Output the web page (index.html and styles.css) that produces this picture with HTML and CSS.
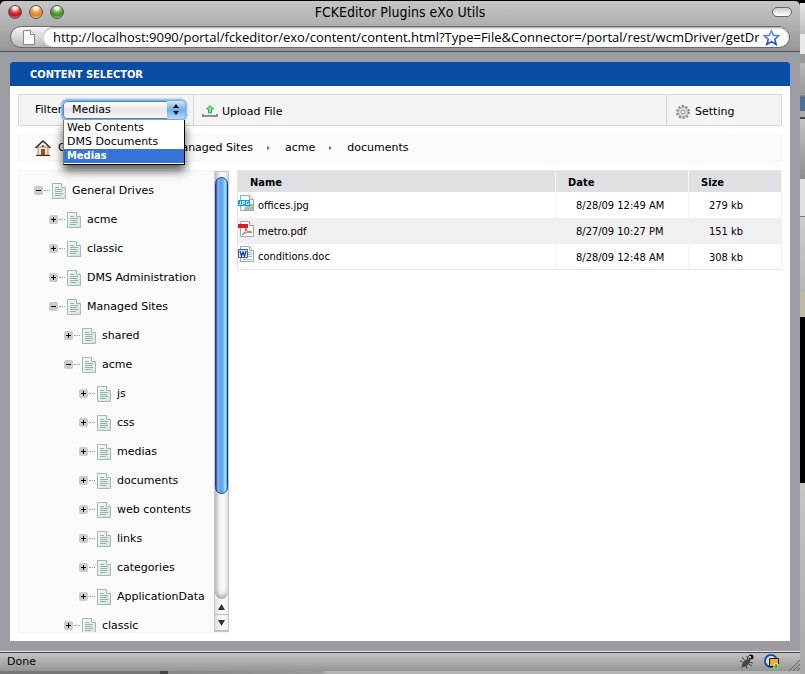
FILE: index.html
```html
<!DOCTYPE html>
<html lang="en">
<head>
<meta charset="utf-8">
<title>FCKEditor Plugins eXo Utils</title>
<link rel="stylesheet" href="styles.css">
</head>
<body>
<svg class="defs" aria-hidden="true">
  <defs>
    <linearGradient id="page-fill" x1="0" y1="0" x2="1" y2="1"><stop offset="0" stop-color="#f4faf9"/><stop offset="1" stop-color="#d5e3e1"/></linearGradient>
    <linearGradient id="star-fill" x1="0" y1="0" x2="0" y2="1"><stop offset="0" stop-color="#6fa5e6"/><stop offset="1" stop-color="#1443cc"/></linearGradient>
    <symbol id="doc" viewBox="0 0 14 16">
      <path d="M.5.5h9l4 4v11H.5z" fill="url(#page-fill)" stroke="#a3b9b7"/>
      <path d="M9.500.5v4h4" fill="#fff" stroke="#a3b9b7"/>
      <path d="M3 4.500h4M3 6.500h8M3 8.500h7M3 10.500h8M3 12.500h6" stroke="#9cb0ae"/>
    </symbol>
    <symbol id="file" viewBox="0 0 16 16">
      <path d="M2.500.5h9l4 4v11h-13z" fill="#fff" stroke="#a5a5a5"/>
      <path d="M11.500.5v4h4" fill="#eee" stroke="#a5a5a5"/>
    </symbol>
  </defs>
</svg>
<div class="window">
  <header class="chrome">
    <div class="titlebar">
      <div class="lights">
        <button class="light red" aria-label="Close"></button>
        <button class="light amber" aria-label="Minimize"></button>
        <button class="light green" aria-label="Zoom"></button>
      </div>
      <h1>FCKEditor Plugins eXo Utils</h1>
      <button class="pill" aria-label="Toggle toolbar"></button>
    </div>
    <div class="location">
      <svg class="page-icon" width="12" height="15" viewBox="0 0 12 15"><path d="M.5.5h7l4 4v10H.5z" fill="#fff" stroke="#888"/><path d="M7.500.5v4h4" fill="#eee" stroke="#888"/></svg>
      <div class="address">
        <input type="text" aria-label="Address" value="http://localhost:9090/portal/fckeditor/exo/content/content.html?Type=File&amp;Connector=/portal/rest/wcmDriver/getDrivers">
        <svg width="17" height="17" viewBox="0 0 17 17"><path d="M8.500 1.500l2.100 4.800 5.200.4-4 3.500 1.300 5.200-4.600-2.800-4.600 2.800 1.300-5.200-4-3.500 5.200-.4z" fill="#f5faff" stroke="url(#star-fill)" stroke-width="1.600"/></svg>
      </div>
    </div>
  </header>

  <main class="page">
    <section class="dialog">
      <h2>Content Selector</h2>
      <div class="body">
        <div class="toolbar">
          <div class="filter">
            <label for="filter">Filter</label>
            <div class="combo">
              <select id="filter"><option>Web Contents</option><option>DMS Documents</option><option selected>Medias</option></select>
              <svg width="18" height="18" viewBox="0 0 18 18"><path d="M9 3l3 4H6zM9 14l3-4H6z" fill="#111"/></svg>
              <ul class="menu">
                <li>Web Contents</li>
                <li>DMS Documents</li>
                <li class="active">Medias</li>
              </ul>
            </div>
          </div>
          <button class="tool upload">
            <svg width="16" height="16" viewBox="0 0 16 16"><path d="M1 10v2h14v-2" fill="none" stroke="#8b8b8b" stroke-width="2"/><path d="M8 1.500l3.500 3.500H9.500v4h-3V5h-2z" fill="#8ce58c" stroke="#2fa84a"/></svg>
            Upload File
          </button>
          <button class="tool setting">
            <svg width="16" height="16" viewBox="0 0 16 16"><circle cx="8" cy="8" r="6" fill="#d9d9d9" stroke="#8e8e8e" stroke-width="2" stroke-dasharray="2.200 1.570"/><circle cx="8" cy="8" r="4.500" fill="#e6e6e6" stroke="#aaa"/><circle cx="8" cy="8" r="2" fill="#fff" stroke="#888"/></svg>
            Setting
          </button>
        </div>

        <nav class="crumbs" aria-label="Breadcrumb">
          <svg width="18" height="18" viewBox="0 0 18 18"><path d="M4 8h10v8H4z" fill="#f3e6d8" stroke="#9b7d68"/><path d="M1.500 9L9 2l7.500 7" fill="none" stroke="#3c2018" stroke-width="1.500"/><path d="M7 10h4v6H7z" fill="#a64e26"/><path d="M8 6h2v2H8z" fill="#865238"/><path d="M2 16.500h14" stroke="#5c1f14"/></svg>
          <a href="#">General Drives</a><i></i>
          <a href="#">Managed Sites</a><i></i>
          <a href="#">acme</a><i></i>
          <a href="#">documents</a>
        </nav>

        <div class="panes">
          <div class="tree-pane">
            <ul class="tree">
              <li class="l0 open"><button aria-label="Collapse"></button><svg><use href="#doc"/></svg><a href="#">General Drives</a></li>
              <li class="l1"><button aria-label="Expand"></button><svg><use href="#doc"/></svg><a href="#">acme</a></li>
              <li class="l1"><button aria-label="Expand"></button><svg><use href="#doc"/></svg><a href="#">classic</a></li>
              <li class="l1"><button aria-label="Expand"></button><svg><use href="#doc"/></svg><a href="#">DMS Administration</a></li>
              <li class="l1 open"><button aria-label="Collapse"></button><svg><use href="#doc"/></svg><a href="#">Managed Sites</a></li>
              <li class="l2"><button aria-label="Expand"></button><svg><use href="#doc"/></svg><a href="#">shared</a></li>
              <li class="l2 open"><button aria-label="Collapse"></button><svg><use href="#doc"/></svg><a href="#">acme</a></li>
              <li class="l3"><button aria-label="Expand"></button><svg><use href="#doc"/></svg><a href="#">js</a></li>
              <li class="l3"><button aria-label="Expand"></button><svg><use href="#doc"/></svg><a href="#">css</a></li>
              <li class="l3"><button aria-label="Expand"></button><svg><use href="#doc"/></svg><a href="#">medias</a></li>
              <li class="l3"><button aria-label="Expand"></button><svg><use href="#doc"/></svg><a href="#">documents</a></li>
              <li class="l3"><button aria-label="Expand"></button><svg><use href="#doc"/></svg><a href="#">web contents</a></li>
              <li class="l3"><button aria-label="Expand"></button><svg><use href="#doc"/></svg><a href="#">links</a></li>
              <li class="l3"><button aria-label="Expand"></button><svg><use href="#doc"/></svg><a href="#">categories</a></li>
              <li class="l3"><button aria-label="Expand"></button><svg><use href="#doc"/></svg><a href="#">ApplicationData</a></li>
              <li class="l2"><button aria-label="Expand"></button><svg><use href="#doc"/></svg><a href="#">classic</a></li>
            </ul>
            <div class="scrollbar">
              <div class="track"><div class="thumb"></div></div>
              <button aria-label="Scroll up"><svg width="7" height="6" viewBox="0 0 7 6"><path d="M3.500 0L7 6H0z" fill="#333"/></svg></button>
              <button aria-label="Scroll down"><svg width="7" height="6" viewBox="0 0 7 6"><path d="M3.500 6L7 0H0z" fill="#333"/></svg></button>
            </div>
          </div>

          <table class="files">
            <thead><tr><th>Name</th><th class="date">Date</th><th class="size">Size</th></tr></thead>
            <tbody>
              <tr><td><span class="name"><svg><use href="#file"/><path d="M6 14c2-5 5-6 9-5v6H6z" fill="#9fc4a8"/><path d="M0 5h12v6H0z" fill="#119bea"/><path d="M2.500 6v3.500H1M4.500 10V6.500h2v2h-2M10.500 6.500h-2v3h2V8" fill="none" stroke="#fff" stroke-width=".9"/></svg><a href="#">offices.jpg</a></span></td><td>8/28/09 12:49 AM</td><td>279 kb</td></tr>
              <tr><td><span class="name"><svg><use href="#file"/><path d="M0 3h10v4H0z" fill="#dc1a21"/><path d="M4 14c3-2 4-5 4-7 0 3 3 5 6 4-4-.5-7 .5-10 3z" fill="none" stroke="#d9484b"/></svg><a href="#">metro.pdf</a></span></td><td>8/27/09 10:27 PM</td><td>151 kb</td></tr>
              <tr><td><span class="name"><svg><use href="#file"/><path d="M10 6.500h4M10 8.500h4M10 10.500h4M5 13.500h9" stroke="#aab4c8"/><path d="M.5 3.500h9v8h-9z" fill="#dce8fa" stroke="#2c5fb4"/><path d="M2 5l1.500 5L5 6l1.500 4L8 5" fill="none" stroke="#173f94" stroke-width="1.300"/></svg><a href="#">conditions.doc</a></span></td><td>8/28/09 12:48 AM</td><td>308 kb</td></tr>
            </tbody>
          </table>
        </div>
      </div>
    </section>
  </main>

  <footer class="status">
    <span>Done</span>
    <svg width="18" height="16" viewBox="0 0 18 16"><path d="M3 14L13 4M2 7l5 2M4 3l4 5M9 15l-1-5M14 12l-5-3M9 2l1 5M15 9l-5-1" stroke="#444" fill="none"/><ellipse cx="8" cy="9" rx="5" ry="2.500" transform="rotate(-45 8 9)" fill="#444"/><circle cx="13" cy="3" r="2.500" fill="#111"/><circle cx="12" cy="3" r="1" fill="#fff"/></svg>
    <svg width="16" height="16" viewBox="0 0 16 16"><circle cx="7" cy="7" r="6" fill="#cfe6ff" stroke="#1d4f9e" stroke-width="2"/><path d="M5.500 4.500h9v8h-9z" fill="#ffa51e" stroke="#1a1a1a"/><path d="M6 5h8v7H6z" fill="#ffa51e"/><path d="M12 9v6M9 12h6" stroke="#fff" stroke-width="3"/><path d="M12 10v5M9 12.500h6" stroke="#49b52f" stroke-width="2"/></svg>
    <svg class="grip" width="12" height="12" viewBox="0 0 12 12"><path d="M1 12L12 1M5 12l7-7M9 12l3-3" stroke="#666"/></svg>
  </footer>
</div>
<aside class="behind" aria-hidden="true"></aside>
<div class="behind-bottom" aria-hidden="true"></div>
</body>
</html>
```
FILE: styles.css
```css
* { box-sizing: border-box; }

body {
  margin: 0;
  min-height: 100vh;
  display: grid;
  grid-template-columns: 1fr 5px;
  grid-template-rows: 1fr 4px;
  font: 11px/16px "DejaVu Sans", Verdana, sans-serif;
  color: #000;
  background: #000;
}

button { font: inherit; color: inherit; padding: 0; border: 0; background: none; }
a { color: inherit; text-decoration: none; }
ul { list-style: none; margin: 0; padding: 0; }
svg { flex: none; }
.defs { position: absolute; width: 0; height: 0; }

.window { display: flex; flex-direction: column; min-width: 0; padding-top: 1px; }

.chrome {
  background: linear-gradient(#c6c6c6, #979797);
  border-bottom: 1px solid #4d4d4d;
  border-radius: 5px 5px 0 0;
  padding: 0 10px 3px;
  height: 51px;
}

.titlebar {
  display: grid;
  grid-template-columns: 60px 1fr 60px;
  align-items: center;
  height: 22px;
  margin: 0 -2px 3px;
}
.titlebar h1 { margin: 0; text-align: center; font: 14px/20px "DejaVu Sans Condensed", "DejaVu Sans", sans-serif; }
.lights { display: flex; gap: 7px; }
.light { width: 14px; height: 14px; border-radius: 50%; border: 1px solid #555; }
.red { background: radial-gradient(circle at 50% 15%, #fff 10%, #e8434b 40%, #c1121e 65%, #ff9a9a); }
.amber { background: radial-gradient(circle at 50% 15%, #fff 10%, #eda047 40%, #d9822b 65%, #ffe694); }
.green { background: radial-gradient(circle at 50% 15%, #fff 10%, #6fb04c 40%, #3f8a28 65%, #c4f09b); }
.pill { justify-self: end; width: 20px; height: 10px; border: 1px solid #666; border-radius: 5px; background: linear-gradient(#ccc, #fff); }

.location {
  display: flex;
  align-items: center;
  height: 22px;
  border: 1px solid #6b6b6b;
  border-radius: 11px;
  background: linear-gradient(#f6f6f6, #b8b8b8);
}
.page-icon { margin: 0 8px 0 12px; }
.address {
  flex: 1;
  min-width: 0;
  height: 20px;
  display: flex;
  align-items: center;
  padding: 0 9px 0 10px;
  gap: 4px;
  background: #fff;
  border-radius: 10px;
  box-shadow: inset 0 1px 2px #999;
}
.address input { flex: 1; min-width: 0; padding: 0; border: 0; outline: 0; background: none; font: 13px/18px "Open Sans", sans-serif; }

.page { flex: 1; background: #9d9ea3; padding: 10px; display: flex; border-bottom: 1px solid #e4e4e4; }
.dialog { flex: 1; min-width: 0; display: flex; flex-direction: column; background: #fff; border-radius: 3px 3px 0 0; }
.dialog h2 {
  margin: 0;
  height: 24px;
  padding-left: 20px;
  border-radius: 3px 3px 0 0;
  background: #094da5;
  color: #fff;
  font: bold 11px/26px "DejaVu Sans Condensed", "DejaVu Sans", sans-serif;
  text-transform: uppercase;
}
.body { flex: 1; display: flex; flex-direction: column; padding: 8px; }

.toolbar { display: flex; height: 32px; background: #f4f4f4; border: 1px solid #d6d6d6; }
.filter { display: flex; align-items: center; width: 175px; padding-left: 16px; border-right: 1px solid #d6d6d6; }
.filter label { width: 28px; }
.combo { position: relative; width: 122px; font-size: 11px; }
.combo select {
  display: block;
  appearance: none;
  width: 122px;
  height: 18px;
  padding: 0 8px;
  font: 11px/16px "DejaVu Sans", sans-serif;
  border: 1px solid #4d86c6;
  border-radius: 4px;
  background: linear-gradient(#fff, #e6e6e6 50%, #fafafa);
  box-shadow: 0 0 2px 2px #78ade0;
  outline: 0;
}
.combo > svg { position: absolute; right: 0; top: 0; background: linear-gradient(#d3e7fa, #6fabe8 50%, #b9e2ff); border-radius: 0 4px 4px 0; pointer-events: none; }
.menu {
  position: absolute;
  z-index: 2;
  top: 19px;
  left: 0;
  width: 122px;
  padding: 1px 0;
  background: #fff;
  border: 1px solid #000;
  border-top: 0;
  border-left-color: #777;
  box-shadow: 0 6px 9px rgba(0, 0, 0, .65);
  line-height: 14px;
}
.menu li { padding-left: 3px; }
.menu .active { background: #3874d8; color: #fff; font-weight: bold; font-family: "DejaVu Sans Condensed", "DejaVu Sans", sans-serif; }
.tool { display: flex; align-items: center; gap: 4px; padding: 3px 8px 0; }
.setting { margin-left: auto; width: 115px; border-left: 1px solid #d6d6d6; }

.crumbs { display: flex; align-items: center; gap: 14px; height: 28px; margin: 8px 0; padding-left: 15px; background: #fafafa; border: 1px solid #f3f3f3; }
.crumbs a:first-of-type { margin-left: -8px; }
.crumbs i { flex: none; width: 4px; height: 4px; border: 2px solid transparent; border-left: 3px solid #3d79b6; border-right: 0; }

.panes { flex: 1; display: flex; align-items: flex-start; gap: 8px; }
.tree-pane { display: flex; align-self: stretch; width: 211px; background: #fafafa; border: 1px solid #f3f3f3; border-right: 0; }
.tree { flex: 1; min-width: 0; height: 461px; overflow: hidden; padding-top: 5px; }
.tree li { display: flex; align-items: center; height: 29px; white-space: nowrap; }
.tree svg { width: 14px; height: 16px; margin: 0 6px 0 9px; }
.tree button { position: relative; flex: none; width: 9px; height: 9px; border-radius: 2px; background: linear-gradient(#000, #000) center / 5px 1px no-repeat, linear-gradient(#000, #000) center / 1px 5px no-repeat, #ccc; }
.tree .open button { background: linear-gradient(#000, #000) center / 5px 1px no-repeat, #ccc; }
.tree button::after { content: ""; position: absolute; left: 10px; top: 4px; width: 6px; border-top: 1px dotted #999; }
.l0 { padding-left: 15px; }
.l1 { padding-left: 30px; }
.l2 { padding-left: 45px; }
.l3 { padding-left: 60px; }

.scrollbar { width: 15px; display: flex; flex-direction: column; border: 1px solid #c8c8c8; background: #eee; }
.track { flex: 1; padding-top: 5px; border-radius: 0 0 7px 7px; background: linear-gradient(90deg, #c9c9c9, #f4f4f4 40%, #fff); box-shadow: inset 0 -3px 4px #aaa; }
.thumb { height: 75%; border: 1px solid #1b3f86; border-radius: 7px; background: linear-gradient(90deg, #1c50b8, #8cb9ee 20%, #559beb 45%, #6bb5f8 65%, #a9e7ff 85%, #4f95dd); }
.scrollbar button { display: grid; place-items: center; height: 16px; background: linear-gradient(90deg, #ddd, #fff 50%, #eee); border-bottom: 1px solid #bbb; }

.files { flex: 1; width: 100%; table-layout: fixed; border-collapse: collapse; border: 1px solid #e4e4e4; font: 11px/16px "DejaVu Sans Condensed", "DejaVu Sans", sans-serif; }
.files th { height: 21px; padding: 3px 0 0 12px; text-align: left; background: #dee0e4; border-right: 1px solid #f4f4f4; }
.files td { height: 26px; padding: 3px 0 0 20px; border-right: 1px solid #f0f0f0; }
.files td:first-child { padding: 0; }
.files tbody tr:nth-child(even) { background: #f0f0f0; }
.date { width: 133px; }
.size { width: 93px; }
.name { display: flex; gap: 4px; }
.name svg { width: 16px; height: 16px; margin-bottom: 4px; }
.name a { padding-top: 3px; }

.status { display: flex; align-items: center; height: 19px; padding-left: 7px; gap: 8px; background: linear-gradient(#c3c3c3, #959595); border-top: 1px solid #444; font: 11px/16px "DejaVu Sans", sans-serif; }
.status span { flex: 1; }
.grip { align-self: flex-end; }
.behind {
  grid-row: 1 / 3;
  grid-column: 2;
  background: linear-gradient(
    #000 0 .4%, #e6e6e6 .4%, #bdbdbd 5%, #555 5% 5.1%, #e9e9e9 5.1% 8%, #999 8% 9.4%,
    #b8b8b8 9.4%, #999 14%, #4f6f95 14.4% 16.5%, #aaa 16.500% 17.400%, #444 17.400% 17.600%, #c4c4c4 17.600%, #8d8d8d 26.500%,
    #e2e2e2 26.500% 32%, #777 32% 32.200%, #ccc 32.200%, #b5b5b5 43.300%,
    #bdb9a6 43.300% 47%, #000 47% 71.500%, #c8c6c2 71.500%, #a8a8a8);
}
.behind-bottom { background: linear-gradient(90deg, #777 20%, #444 20%, #444 21%, #888 21%, #999 40%, #b5b5b5 41%); }
```
